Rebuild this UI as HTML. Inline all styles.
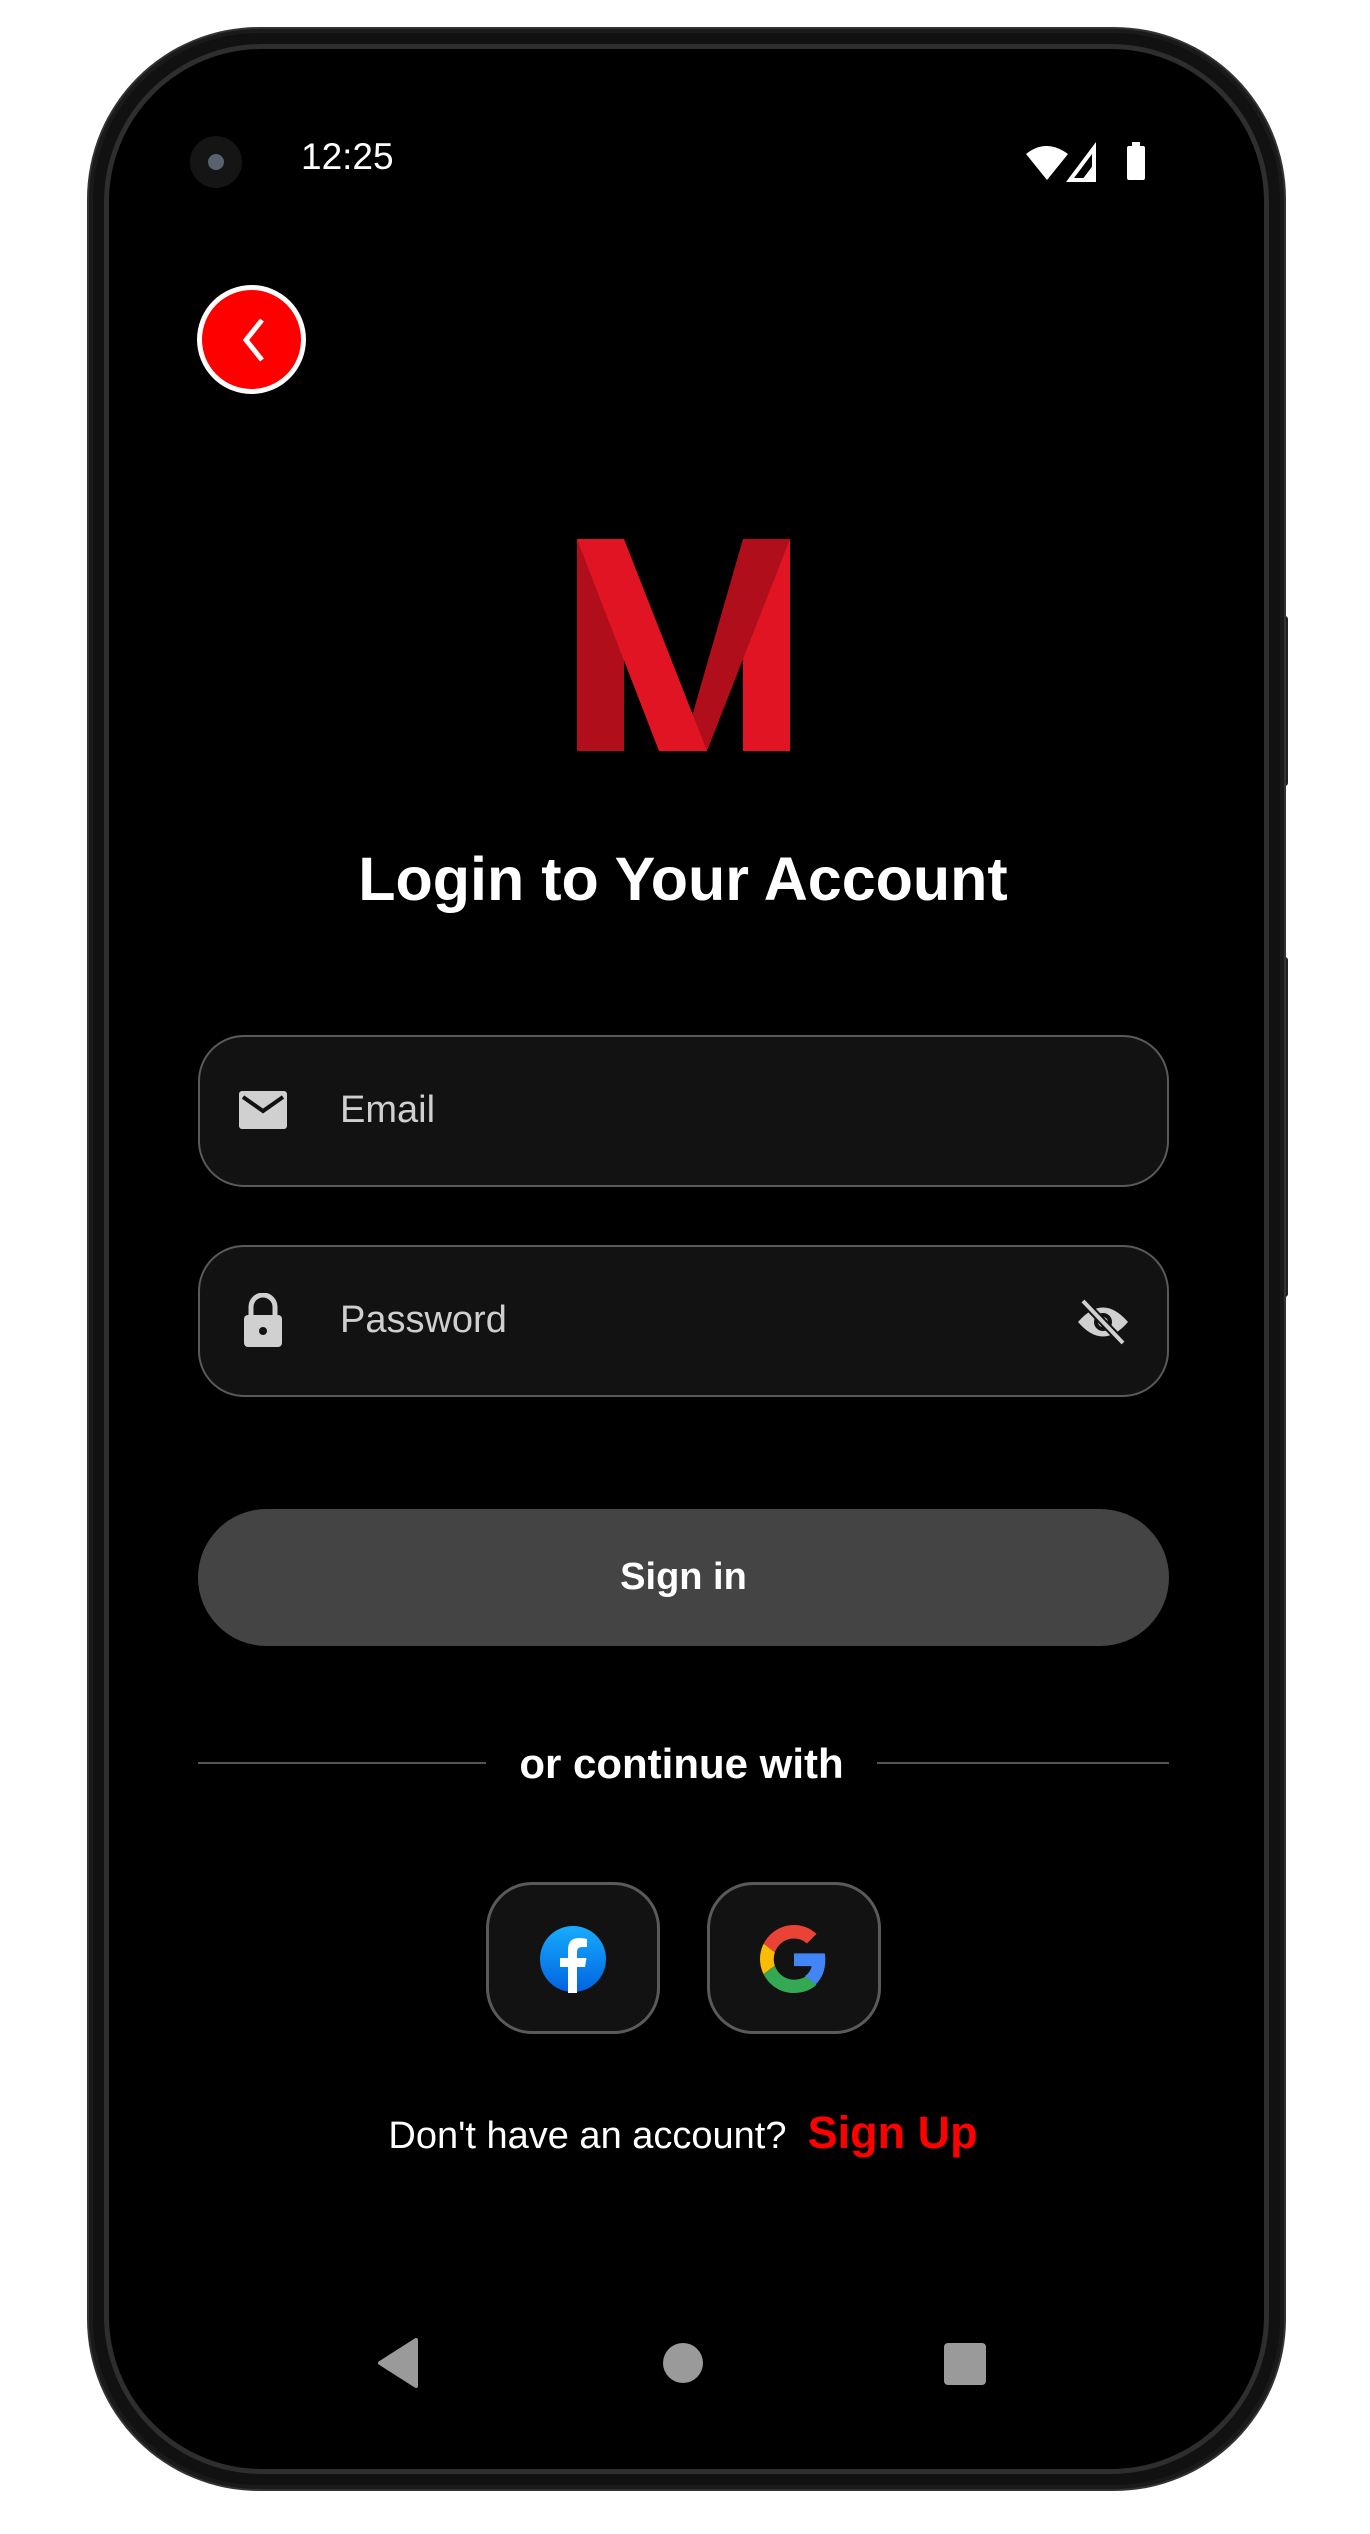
<!DOCTYPE html>
<html><head><meta charset="utf-8"><style>
*{margin:0;padding:0;box-sizing:border-box}
body{width:1370px;height:2534px;background:#fff;position:relative;overflow:hidden;font-family:"Liberation Sans",Roboto,sans-serif}
.abs{position:absolute}
.phone{left:89px;top:29px;width:1195px;height:2460px;border-radius:170px;background:#111;border:4px solid #1a1a1a;box-shadow:0 0 0 2px #333}
.ring{left:104px;top:44px;width:1165px;height:2430px;border-radius:158px;border:5px solid #2e2e2e;background:#000}
.screen{left:117px;top:60px;width:1139px;height:2398px;border-radius:145px;background:#000}
.field{left:198px;width:971px;height:152px;border:2px solid #5a5a5a;border-radius:46px;background:#121212}
.ph{color:#cfcfcf;font-size:38px;left:340px}
</style></head><body>
<div class="abs" style="left:1280px;top:616px;width:8px;height:170px;background:#222;border-radius:3px"></div>
<div class="abs" style="left:1280px;top:957px;width:8px;height:340px;background:#222;border-radius:3px"></div>
<div class="abs phone"></div>
<div class="abs ring"></div>
<div class="abs screen"></div>
<div class="abs" style="left:190px;top:136px;width:52px;height:52px;border-radius:50%;background:#151515"></div>
<div class="abs" style="left:208px;top:154px;width:16px;height:16px;border-radius:50%;background:#5a6270"></div>
<div class="abs" style="left:301px;top:136px;color:#fff;font-size:37px">12:25</div>
<svg class="abs" style="left:1024px;top:140px" width="130" height="46" viewBox="0 0 130 46">
<path d="M2 14 Q22 -2 44 14 L23 40 Z" fill="#fff"/>
<path d="M46 40 L70 8 L70 40 Z" fill="none" stroke="#fff" stroke-width="4"/>
<path d="M58 40 L70 24 L70 40Z" fill="#fff"/>
<rect x="103" y="6" width="18" height="34" rx="2" fill="#fff"/><rect x="108" y="2" width="8" height="6" fill="#fff"/>
</svg>
<div class="abs" style="left:197px;top:285px;width:109px;height:109px;border-radius:50%;background:#f00;border:5px solid #fff"></div>
<svg class="abs" style="left:230px;top:314px" width="44" height="52" viewBox="0 0 44 52"><path d="M32 6 L16 26 L32 46" fill="none" stroke="#fff" stroke-width="5"/></svg>
<svg class="abs" style="left:577px;top:539px" width="213" height="212" viewBox="0 0 213 212">
<rect x="0" y="0" width="47" height="212" fill="#b00e1b"/>
<rect x="166" y="0" width="47" height="212" fill="#e11424"/>
<polygon points="166,0 213,0 130,212 105,212" fill="#b00e1b"/>
<polygon points="0,0 47,0 130,212 82,212" fill="#e11424"/>
</svg>
<div class="abs" style="left:0;width:1366px;top:844px;text-align:center;color:#fff;font-size:61px;font-weight:bold">Login to Your Account</div>
<div class="abs field" style="top:1035px"></div>
<svg class="abs" style="left:238px;top:1090px" width="50" height="42" viewBox="0 0 50 42"><rect x="1" y="1" width="48" height="38" rx="3" fill="#d0d0d0"/><path d="M5 7 L25 21 L45 7" fill="none" stroke="#121212" stroke-width="4"/></svg>
<div class="abs ph" style="top:1089px">Email</div>
<div class="abs field" style="top:1245px"></div>
<svg class="abs" style="left:242px;top:1293px" width="42" height="56" viewBox="0 0 42 56"><path d="M9 22 V14 A12 12 0 0 1 33 14 V22" fill="none" stroke="#d0d0d0" stroke-width="5"/><rect x="2" y="22" width="38" height="32" rx="4" fill="#d0d0d0"/><circle cx="21" cy="38" r="4" fill="#121212"/></svg>
<div class="abs ph" style="top:1299px">Password</div>
<svg class="abs" style="left:1075px;top:1297px" width="56" height="50" viewBox="0 0 56 50"><path d="M3 25 Q28 -4 53 25 Q28 54 3 25Z" fill="#d0d0d0"/><circle cx="28" cy="25" r="9" fill="#121212"/><circle cx="28" cy="25" r="5" fill="#d0d0d0"/><path d="M8 4 L48 46" stroke="#121212" stroke-width="8"/><path d="M8 4 L48 46" stroke="#d0d0d0" stroke-width="4"/></svg>
<div class="abs" style="left:198px;top:1509px;width:971px;height:137px;border-radius:69px;background:#444;color:#fff;font-size:38px;font-weight:bold;text-align:center;line-height:137px">Sign in</div>
<div class="abs" style="left:198px;top:1762px;width:288px;height:2px;background:#555"></div>
<div class="abs" style="left:877px;top:1762px;width:292px;height:2px;background:#555"></div>
<div class="abs" style="left:486px;width:391px;top:1740px;text-align:center;color:#fff;font-size:42px;font-weight:bold">or continue with</div>
<div class="abs" style="left:486px;top:1882px;width:174px;height:152px;border:3px solid #5a5a5a;border-radius:46px;background:#121212"></div>
<div class="abs" style="left:707px;top:1882px;width:174px;height:152px;border:3px solid #5a5a5a;border-radius:46px;background:#121212"></div>
<svg class="abs" style="left:539px;top:1925px" width="68" height="68" viewBox="0 0 68 68"><defs><linearGradient id="fb" x1="0" y1="0" x2="0" y2="1"><stop offset="0" stop-color="#18acfe"/><stop offset="1" stop-color="#0163e0"/></linearGradient></defs><circle cx="34" cy="34" r="33" fill="url(#fb)"/><path d="M38 68 V42 H46 L47.5 33 H38 V27 Q38 22 43 22 H48 V14 Q44 13 40 13 Q29 13 29 25 V33 H21 V42 H29 V68Z" fill="#fff"/></svg>
<svg class="abs" style="left:760px;top:1925px" width="68" height="68" viewBox="0 0 48 48"><path fill="#EA4335" d="M24 9.5c3.5 0 6.6 1.2 9.1 3.6l6.8-6.8C35.8 2.4 30.3 0 24 0 14.6 0 6.6 5.4 2.6 13.2l7.9 6.2C12.4 13.7 17.7 9.5 24 9.5z"/><path fill="#4285F4" d="M46.1 24.5c0-1.6-.1-3.1-.4-4.5H24v9h12.4c-.5 2.9-2.2 5.4-4.7 7l7.6 5.9c4.4-4.1 6.8-10.1 6.8-17.4z"/><path fill="#FBBC05" d="M10.5 28.6c-.5-1.4-.8-3-.8-4.6s.3-3.2.8-4.6l-7.9-6.2C.9 16.5 0 20.1 0 24s.9 7.5 2.6 10.8l7.9-6.2z"/><path fill="#34A853" d="M24 48c6.5 0 11.9-2.1 15.9-5.8l-7.6-5.9c-2.1 1.4-4.9 2.3-8.3 2.3-6.3 0-11.6-4.2-13.5-9.9l-7.9 6.2C6.6 42.6 14.6 48 24 48z"/></svg>
<div class="abs" style="left:0;width:1366px;top:2107px;text-align:center;color:#fff;font-size:38px">Don't have an account?&nbsp;&nbsp;<span style="color:#f00;font-weight:bold;font-size:45px">Sign Up</span></div>
<svg class="abs" style="left:376px;top:2338px" width="44" height="50" viewBox="0 0 44 50"><path d="M40 2 V48 L4 25Z" fill="#9a9a9a" stroke="#9a9a9a" stroke-width="4" stroke-linejoin="round"/></svg>
<div class="abs" style="left:663px;top:2343px;width:40px;height:40px;border-radius:50%;background:#9a9a9a"></div>
<div class="abs" style="left:944px;top:2343px;width:42px;height:42px;border-radius:4px;background:#9a9a9a"></div>
</body></html>
